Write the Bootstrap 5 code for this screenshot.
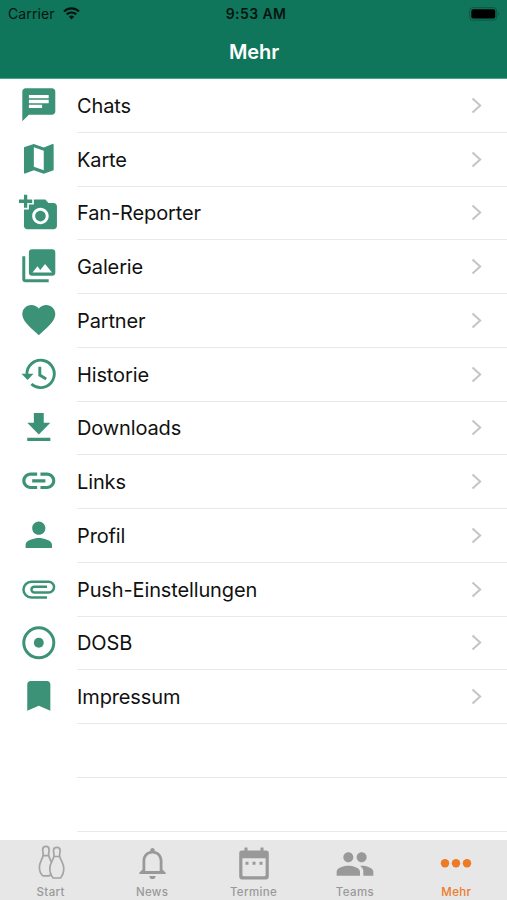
<!DOCTYPE html>
<html lang="de">
<head>
<meta charset="utf-8">
<meta name="viewport" content="width=device-width, initial-scale=1">
<title>Mehr</title>
<link href="https://cdn.jsdelivr.net/npm/bootstrap@5.3.0/dist/css/bootstrap.min.css" rel="stylesheet">
<style>
body{font-family:Inter,"Liberation Sans",sans-serif;height:900px;overflow:hidden;background:#fff;color:#111}
.app-head{height:79px;background:#10765b;border-bottom:1px solid #4da48c}
.status-row{height:27px;font-size:14px;line-height:27px;color:#04150f;padding:0 7px 0 8px}
.status-row>*{flex:1 1 0}
.clock{font-weight:600;letter-spacing:.4px;padding-left:4px}
.carrier{letter-spacing:.1px}
.app-title{font-size:20px;line-height:51px;font-weight:600;letter-spacing:-.1px;padding-left:1px}
.menu-row{height:53.75px;color:#111}
.menu-row:hover{color:#111}
.menu-icon{width:77px;padding:6px 0 0 19px;line-height:0}
.menu-icon svg{width:39.6px;height:39.6px;fill:#3c9277}
.menu-icon .ln{fill:none;stroke:#3c9277}
.menu-text{border-bottom:1px solid #e8e8e8;padding:1px 24px 0 0;font-size:20px;letter-spacing:-.13px}
.menu-text svg{margin-top:-1px}
.tabs{height:60px;background:#e7e7e7;color:#999}
.tab-item{flex:1 1 0;color:#999;font-size:11.5px;font-weight:500;line-height:16px;letter-spacing:.35px}
.tab-item svg{width:40px;height:40px;margin-top:4px;fill:currentColor}
.tab-item.on{color:#ed7a26}
</style>
<script src="https://cdn.jsdelivr.net/npm/bootstrap@5.3.0/dist/js/bootstrap.bundle.min.js"></script>
</head>
<body class="d-flex flex-column">
<header class="app-head flex-shrink-0">
  <div class="status-row d-flex">
    <div class="carrier d-flex align-items-center"><span>Carrier</span>
      <svg class="ms-2" width="17" height="13" viewBox="0 0 17 13" fill="none" stroke="#04150f" stroke-width="2.2"><path d="M1 4.5a10.8 10.8 0 0 1 15 0M3.7 7.4a7 7 0 0 1 9.6 0"/><path d="M8.5 12.4 5.9 9.7a3.8 3.8 0 0 1 5.2 0z" fill="#04150f" stroke="none"/></svg>
    </div>
    <div class="clock text-center">9:53 AM</div>
    <div class="d-flex align-items-center justify-content-end">
      <svg width="31" height="14" viewBox="0 0 31 14"><rect x=".7" y=".7" width="27" height="12.4" rx="3" fill="none" stroke="#0b5743"/><rect x="2.3" y="2.3" width="24" height="9.2" rx="1.8" fill="#000"/><path d="M29 4.8q1.8 2.1 0 4.2z" fill="#0b5743"/></svg>
    </div>
  </div>
  <div class="app-title text-center text-white">Mehr</div>
</header>
<main class="flex-grow-1 overflow-hidden">
  <a class="menu-row d-flex text-decoration-none"><span class="menu-icon flex-shrink-0"><svg viewBox="0 0 24 24"><path d="M20 2H4c-1.1 0-1.99.9-1.99 2L2 22l4-4h14c1.1 0 2-.9 2-2V4c0-1.1-.9-2-2-2zM6 9h12v2H6V9zm8 5H6v-2h8v2zm4-6H6V6h12v2z"/></svg></span><span class="menu-text flex-grow-1 d-flex align-items-center justify-content-between">Chats<svg width="12" height="17" viewBox="0 0 12 17"><path d="M1.5 1.5 9.2 8.5 1.5 15.5" fill="none" stroke="#c4c4c7" stroke-width="2"/></svg></span></a>
  <a class="menu-row d-flex text-decoration-none"><span class="menu-icon flex-shrink-0"><svg viewBox="0 0 24 24"><path d="M20.5 3l-.16.03L15 5.1 9 3 3.36 4.9c-.21.07-.36.25-.36.48V20.5c0 .28.22.5.5.5l.16-.03L9 18.9l6 2.1 5.64-1.9c.21-.07.36-.25.36-.48V3.5c0-.28-.22-.5-.5-.5zM15 19l-6-2.11V5l6 2.11V19z"/></svg></span><span class="menu-text flex-grow-1 d-flex align-items-center justify-content-between">Karte<svg width="12" height="17" viewBox="0 0 12 17"><path d="M1.5 1.5 9.2 8.5 1.5 15.5" fill="none" stroke="#c4c4c7" stroke-width="2"/></svg></span></a>
  <a class="menu-row d-flex text-decoration-none"><span class="menu-icon flex-shrink-0"><svg viewBox="0 0 24 24"><path d="M3 4V1h2v3h3v2H5v3H3V6H0V4h3zm3 6V7h3V4h7l1.830 2H21c1.1 0 2 .9 2 2v12c0 1.1-.9 2-2 2H5c-1.1 0-2-.9-2-2V10h3zm7 9c2.760 0 5-2.240 5-5s-2.240-5-5-5-5 2.240-5 5 2.240 5 5 5zm-3.2-5c0 1.770 1.430 3.2 3.2 3.2s3.2-1.430 3.2-3.2-1.430-3.2-3.2-3.2-3.2 1.430-3.2 3.2z"/></svg></span><span class="menu-text flex-grow-1 d-flex align-items-center justify-content-between">Fan-Reporter<svg width="12" height="17" viewBox="0 0 12 17"><path d="M1.5 1.5 9.2 8.5 1.5 15.5" fill="none" stroke="#c4c4c7" stroke-width="2"/></svg></span></a>
  <a class="menu-row d-flex text-decoration-none"><span class="menu-icon flex-shrink-0"><svg viewBox="0 0 24 24"><path fill-rule="evenodd" d="M8 2h12a2 2 0 0 1 2 2v12a2 2 0 0 1-2 2H8a2 2 0 0 1-2-2V4a2 2 0 0 1 2-2zM8.2 16H20l-4.2-5.1-2.9 3.6-1.7-2.2zM2 6.2h1.8V20.2H18V22H4a2 2 0 0 1-2-2z"/></svg></span><span class="menu-text flex-grow-1 d-flex align-items-center justify-content-between">Galerie<svg width="12" height="17" viewBox="0 0 12 17"><path d="M1.5 1.5 9.2 8.5 1.5 15.5" fill="none" stroke="#c4c4c7" stroke-width="2"/></svg></span></a>
  <a class="menu-row d-flex text-decoration-none"><span class="menu-icon flex-shrink-0"><svg viewBox="0 0 24 24"><path d="M12 21.35l-1.45-1.32C5.4 15.36 2 12.28 2 8.5 2 5.42 4.42 3 7.5 3c1.74 0 3.41.81 4.5 2.09C13.09 3.81 14.76 3 16.5 3 19.58 3 22 5.42 22 8.5c0 3.78-3.4 6.86-8.55 11.54L12 21.35z"/></svg></span><span class="menu-text flex-grow-1 d-flex align-items-center justify-content-between">Partner<svg width="12" height="17" viewBox="0 0 12 17"><path d="M1.5 1.5 9.2 8.5 1.5 15.5" fill="none" stroke="#c4c4c7" stroke-width="2"/></svg></span></a>
  <a class="menu-row d-flex text-decoration-none"><span class="menu-icon flex-shrink-0"><svg viewBox="0 0 24 24"><path class="ln" stroke-width="1.75" d="M4.8 12.6A8.3 8.3 0 1 1 7.5 18.2M12.6 7.7v5.1l3.9 2.3"/><path d="M1.500 12h7.300l-3.600 3.800z"/></svg></span><span class="menu-text flex-grow-1 d-flex align-items-center justify-content-between">Historie<svg width="12" height="17" viewBox="0 0 12 17"><path d="M1.5 1.5 9.2 8.5 1.5 15.5" fill="none" stroke="#c4c4c7" stroke-width="2"/></svg></span></a>
  <a class="menu-row d-flex text-decoration-none"><span class="menu-icon flex-shrink-0"><svg viewBox="0 0 24 24"><path d="M19 9h-4V3H9v6H5l7 7 7-7zM5 18v2h14v-2H5z"/></svg></span><span class="menu-text flex-grow-1 d-flex align-items-center justify-content-between">Downloads<svg width="12" height="17" viewBox="0 0 12 17"><path d="M1.5 1.5 9.2 8.5 1.5 15.5" fill="none" stroke="#c4c4c7" stroke-width="2"/></svg></span></a>
  <a class="menu-row d-flex text-decoration-none"><span class="menu-icon flex-shrink-0"><svg viewBox="0 0 24 24"><path d="M3.9 12c0-1.71 1.39-3.1 3.1-3.1h4V7H7c-2.76 0-5 2.24-5 5s2.24 5 5 5h4v-1.9H7c-1.71 0-3.1-1.39-3.1-3.1zM8 13h8v-2H8v2zm9-6h-4v1.9h4c1.71 0 3.1 1.39 3.1 3.1s-1.39 3.1-3.1 3.1h-4V17h4c2.76 0 5-2.24 5-5s-2.24-5-5-5z"/></svg></span><span class="menu-text flex-grow-1 d-flex align-items-center justify-content-between">Links<svg width="12" height="17" viewBox="0 0 12 17"><path d="M1.5 1.5 9.2 8.5 1.5 15.5" fill="none" stroke="#c4c4c7" stroke-width="2"/></svg></span></a>
  <a class="menu-row d-flex text-decoration-none"><span class="menu-icon flex-shrink-0"><svg viewBox="0 0 24 24"><path d="M12 12c2.21 0 4-1.79 4-4s-1.79-4-4-4-4 1.79-4 4 1.79 4 4 4zm0 2c-2.67 0-8 1.34-8 4v2h16v-2c0-2.66-5.33-4-8-4z"/></svg></span><span class="menu-text flex-grow-1 d-flex align-items-center justify-content-between">Profil<svg width="12" height="17" viewBox="0 0 12 17"><path d="M1.5 1.5 9.2 8.5 1.5 15.5" fill="none" stroke="#c4c4c7" stroke-width="2"/></svg></span></a>
  <a class="menu-row d-flex text-decoration-none"><span class="menu-icon flex-shrink-0"><svg viewBox="0 0 24 24"><path class="ln" stroke-width="1.5" d="M17 17.3H7.5a4.8 4.8 0 0 1 0-9.6H18a3.25 3.25 0 0 1 0 6.5H9.3a1.75 1.75 0 0 1 0-3.5H17"/></svg></span><span class="menu-text flex-grow-1 d-flex align-items-center justify-content-between">Push-Einstellungen<svg width="12" height="17" viewBox="0 0 12 17"><path d="M1.5 1.5 9.2 8.5 1.5 15.5" fill="none" stroke="#c4c4c7" stroke-width="2"/></svg></span></a>
  <a class="menu-row d-flex text-decoration-none"><span class="menu-icon flex-shrink-0"><svg viewBox="0 0 24 24"><circle class="ln" cx="12" cy="12" r="9.1" stroke-width="1.8"/><circle cx="12" cy="12" r="3"/></svg></span><span class="menu-text flex-grow-1 d-flex align-items-center justify-content-between">DOSB<svg width="12" height="17" viewBox="0 0 12 17"><path d="M1.5 1.5 9.2 8.5 1.5 15.5" fill="none" stroke="#c4c4c7" stroke-width="2"/></svg></span></a>
  <a class="menu-row d-flex text-decoration-none"><span class="menu-icon flex-shrink-0"><svg viewBox="0 0 24 24"><path d="M17 3H7c-1.1 0-1.99.9-1.99 2L5 21l7-3 7 3V5c0-1.1-.9-2-2-2z"/></svg></span><span class="menu-text flex-grow-1 d-flex align-items-center justify-content-between">Impressum<svg width="12" height="17" viewBox="0 0 12 17"><path d="M1.5 1.5 9.2 8.5 1.5 15.5" fill="none" stroke="#c4c4c7" stroke-width="2"/></svg></span></a>
  <div class="menu-row d-flex"><span class="menu-icon flex-shrink-0"></span><span class="menu-text flex-grow-1"></span></div>
  <div class="menu-row d-flex"><span class="menu-icon flex-shrink-0"></span><span class="menu-text flex-grow-1"></span></div>
</main>
<nav class="tabs d-flex flex-shrink-0">
  <a class="tab-item d-flex flex-column align-items-center text-decoration-none"><svg viewBox="0 0 40 40"><g fill="#e7e7e7" stroke="#a4a4a4" stroke-width="1.7" stroke-linejoin="round"><path d="M14.900 2.400c1.900 0 3.200 1.400 3.200 3.300 0 1.800-.6 3.300-.5 5.200.2 3.600 4 7 4 12.300 0 3.500-1.500 6.800-3 8.600h-6.600c-2.200-1.800-3.600-5.100-3.600-8.600 0-5.300 3.600-8.700 3.800-12.300.1-1.900-.5-3.400-.5-5.200 0-1.900 1.300-3.300 3.200-3.300zM12.200 11.600h5.400"/><path d="M25.800 3.300c1.900 0 3.300 1.400 3.300 3.300 0 1.800-.6 3.300-.5 5.200.2 3.600 4.200 7.200 4.200 12.500 0 3.700-1.500 7.600-3.300 9.700h-7.400c-1.800-2.100-3.300-6-3.300-9.700 0-5.300 4-8.900 4.200-12.500.1-1.900-.5-3.400-.5-5.200 0-1.900 1.400-3.300 3.300-3.300zM23 12.500h5.600"/></g></svg>Start</a>
  <a class="tab-item d-flex flex-column align-items-center text-decoration-none"><svg viewBox="0 0 40 40"><path fill-rule="evenodd" d="M20.500 4c1.400 0 2.200 1 2.200 2.200v.7c4.800 1 7.800 5 7.800 10v8.600l3.200 3.200v1.300H7.300v-1.300l3.200-3.200v-8.600c0-5 3-9 7.800-10v-.7C18.300 5 19.100 4 20.500 4zm0 5.600c-4.200 0-7.200 3.200-7.200 7.300v10h14.400v-10c0-4.100-3-7.300-7.200-7.300zM17.400 32h6.200a3.100 3.100 0 0 1-6.200 0z"/></svg>News</a>
  <a class="tab-item d-flex flex-column align-items-center text-decoration-none"><svg viewBox="0 0 40 40"><path fill-rule="evenodd" d="M10.500 3.600h3V6.600h13v-3h3V6.600H32a2.800 2.800 0 0 1 2.800 2.800v23.200A2.800 2.800 0 0 1 32 35.400H8a2.800 2.800 0 0 1-2.800-2.800V9.400A2.800 2.800 0 0 1 8 6.600h2.500zM8.400 14.300v16.400a1.500 1.500 0 0 0 1.500 1.500h20.200a1.500 1.500 0 0 0 1.500-1.500V14.300zM11.500 17.800h3v3h-3zm7 0h3v3h-3zm7 0h3v3h-3z"/></svg>Termine</a>
  <a class="tab-item d-flex flex-column align-items-center text-decoration-none"><svg viewBox="0 0 24 24"><path d="M16 11c1.66 0 2.99-1.34 2.99-3S17.66 5 16 5c-1.66 0-3 1.34-3 3s1.34 3 3 3zm-8 0c1.66 0 2.99-1.34 2.99-3S9.66 5 8 5C6.34 5 5 6.34 5 8s1.34 3 3 3zm0 2c-2.33 0-7 1.17-7 3.5V19h14v-2.5c0-2.33-4.67-3.5-7-3.5zm8 0c-.29 0-.62.02-.97.05 1.16.84 1.97 1.97 1.97 3.45V19h6v-2.5c0-2.33-4.67-3.5-7-3.5z"/></svg>Teams</a>
  <a class="tab-item on d-flex flex-column align-items-center text-decoration-none"><svg viewBox="0 0 40 40"><circle cx="9" cy="19.300" r="4.200"/><circle cx="20" cy="19.300" r="4.200"/><circle cx="31" cy="19.300" r="4.200"/></svg>Mehr</a>
</nav>
</body>
</html>
